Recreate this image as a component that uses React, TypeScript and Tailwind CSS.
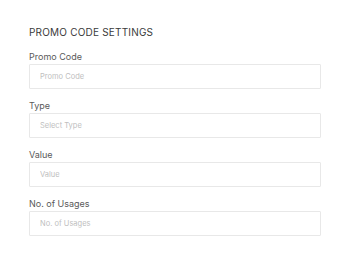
const fields = [
  { label: 'Promo Code', placeholder: 'Promo Code' },
  { label: 'Type', placeholder: 'Select Type' },
  { label: 'Value', placeholder: 'Value' },
  { label: 'No. of Usages', placeholder: 'No. of Usages' },
];

export default function App() {
  return (
    <div className="w-[350px] h-[263px] bg-white px-[29px] pt-[25px]" style={{ fontFamily: 'Inter, "Noto Sans", sans-serif' }}>
      <h2 className="h-[14px] leading-[14px] text-[10px] text-[#3a3a3a] tracking-[0.2px] mb-[11px]">PROMO CODE SETTINGS</h2>
      <div className="flex flex-col gap-[10px]">
        {fields.map(f => (
          <div key={f.label} className="flex flex-col gap-[1px]">
            <label className="h-[13px] leading-[13px] text-[9px] text-[#5a5a5a]">{f.label}</label>
            <input
              type="text"
              placeholder={f.placeholder}
              className="w-[292px] h-[25px] px-[10px] text-[7.5px] border border-[#e8e8e8] rounded-[1px] placeholder:text-[#c0c0c0] focus:outline-none"
            />
          </div>
        ))}
      </div>
    </div>
  );
}
